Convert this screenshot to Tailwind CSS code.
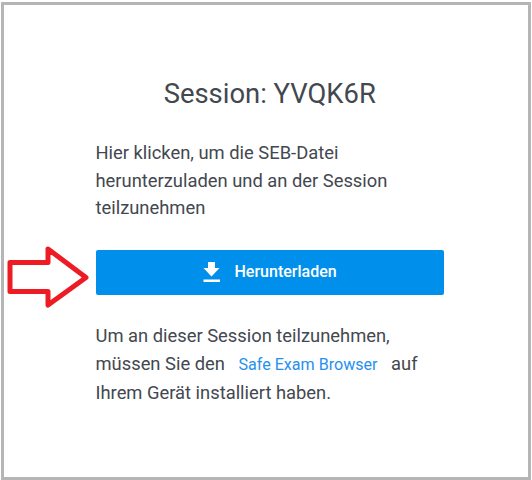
<!DOCTYPE html>
<html lang="de">
<head>
    <meta charset="UTF-8">
    <meta name="viewport" content="width=device-width, initial-scale=1.0">
    <title>Session beitreten</title>
    <script src="https://cdn.jsdelivr.net/npm/@tailwindcss/browser@4"></script>
</head>
<body class="h-screen overflow-hidden bg-white pt-[2px] pl-px font-['Roboto',sans-serif] text-[#43484f]">
    <main class="relative h-[478px] w-[530px] border-3 border-[#b5b5b5] pl-[91.5px] pt-[71px]">
        <div class="w-[348.5px]">
            <h1 class="text-center text-[27.4px] leading-9">Session: YVQK6R</h1>

            <p class="mt-[27px] text-[18.35px] leading-[27.7px] whitespace-nowrap">
                Hier klicken, um die SEB-Datei<br>
                herunterzuladen und an der Session<br>
                teilzunehmen
            </p>

            <!-- Download -->
            <button class="mt-[28px] flex h-[45px] w-full items-center rounded-[2px] bg-[#0090ec] pl-[107.5px] text-[16px] font-medium text-white">
                <svg class="mr-[14.5px] mb-px h-5 w-[17px]" viewBox="0 0 17 20" fill="currentColor">
                    <path d="M5 0h7v6h4.5L8.500 14.500.5 6H5zM.5 17.500h16.500V20H.5z"/>
                </svg>
                <span class="mb-px">Herunterladen</span>
            </button>

            <p class="mt-[27px] text-[18.35px] leading-[27.7px] whitespace-nowrap">
                Um an dieser Session teilzunehmen,<br>
                müssen Sie den <a href="#" class="mx-[9px] text-[16.1px] text-[#2690ee]">Safe Exam Browser</a> auf<br>
                Ihrem Gerät installiert haben.
            </p>
        </div>

        <!-- Arrow pointing at the button -->
        <svg class="absolute left-[3px] top-[238px] h-[70px] w-[84px]" viewBox="0 0 84 70" fill="none" stroke="#ed1c24" stroke-width="5" stroke-linejoin="round">
            <path d="M3 19.500H41V6L79 34.500 41 62V48.500H3z"/>
        </svg>
    </main>
</body>
</html>
